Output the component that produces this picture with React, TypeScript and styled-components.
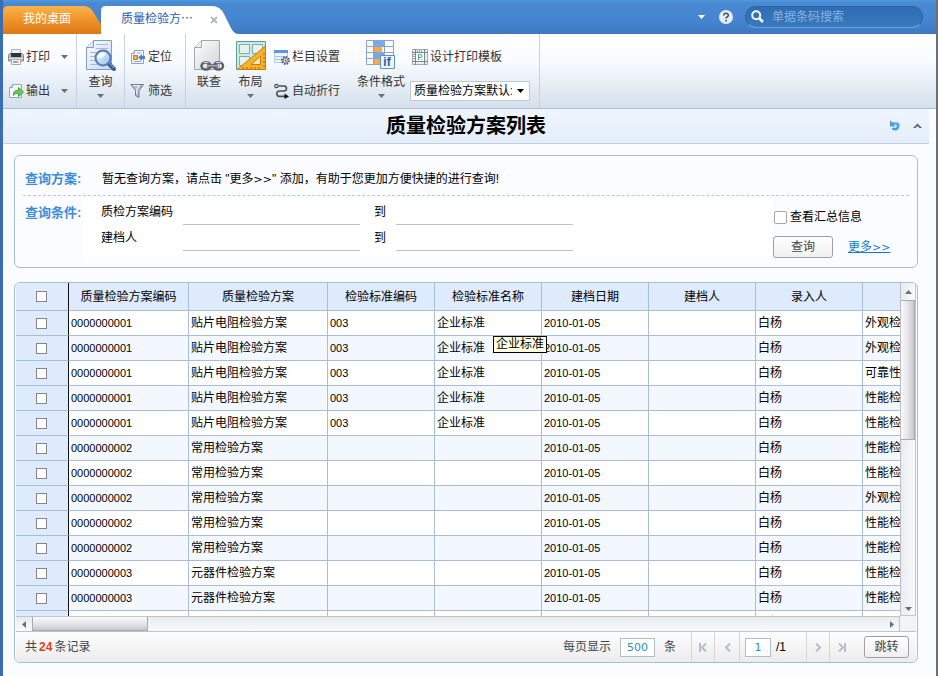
import React, { useLayoutEffect, useRef, useState } from "react";
import styled, { createGlobalStyle, css } from "styled-components";

const GlobalStyle = createGlobalStyle`
  *, *::before, *::after { box-sizing: border-box; }
  body { margin: 0; }
  body, button, input, select, table {
    font-family: "Liberation Sans", "Noto Sans CJK SC", sans-serif;
    font-size: 12px;
    line-height: 16px;
    color: #000;
  }
`;

const Page = styled.div`
  display: flex;
  flex-direction: column;
  height: 100vh;
  min-height: 480px;
  overflow: hidden;
  background: #fafcff;
  border-left: 3px solid #3a6db3;
  border-right: 2px solid #707070;
`;

/* ---------- top bar ---------- */

const TopBar = styled.header`
  display: flex;
  align-items: flex-end;
  flex: none;
  height: 34px;
  background: linear-gradient(#4a9bdc 0, #4a88d2 3px, #4685d0 20px, #3f77c2 100%);
`;

const Tab = styled.div<{ $active?: boolean }>`
  position: relative;
  display: flex;
  align-items: center;
  height: 28px;
  width: ${(p) => (p.$active ? 138 : 98)}px;
  padding: 0 ${(p) => (p.$active ? 16 : 18)}px 2px 20px;
`;

const TabShape = styled.svg`
  position: absolute;
  inset: 0;
  width: 100%;
  height: 100%;
`;

const PlainButton = styled.button`
  display: flex;
  align-items: center;
  justify-content: center;
  position: relative;
  padding: 0;
  border: 0;
  background: none;
  cursor: pointer;
`;

const TabLabel = styled(PlainButton)<{ $active?: boolean }>`
  color: ${(p) => (p.$active ? "#1a62b4" : "#fff")};
`;

const TabClose = styled(PlainButton)`
  margin-left: 16px;
  margin-top: 2px;
  width: 10px;
  height: 10px;
`;

const TopTools = styled.div`
  display: flex;
  align-items: center;
  align-self: stretch;
  gap: 14px;
  margin-left: auto;
  padding-right: 13px;
  padding-bottom: 1px;
`;

const SearchBox = styled.label`
  display: flex;
  align-items: center;
  gap: 8px;
  width: 178px;
  height: 22px;
  margin-left: -2px;
  padding: 0 12px 0 5px;
  border-radius: 11px;
  border: 1px solid #2a65ab;
  border-bottom-color: #69a3df;
  background: linear-gradient(#2f6db3, #3879bd);
`;

const SearchInput = styled.input`
  flex: 1;
  min-width: 0;
  padding: 0;
  border: 0;
  outline: 0;
  background: none;
  color: #fff;
  &::placeholder { color: #83b4e3; opacity: 1; }
`;

/* ---------- ribbon ---------- */

const Ribbon = styled.nav`
  display: flex;
  flex: none;
  height: 75px;
  border-bottom: 1px solid #a9bdd4;
  background: linear-gradient(#fff, #f8fbff 38%, #d4e0ec);
`;

const RibbonGroup = styled.div`
  display: flex;
  padding: 6px 5px 0;
  border-right: 1px solid #c6d2df;
`;

const SmallStack = styled.div<{ $width: number }>`
  display: flex;
  flex-direction: column;
  width: ${(p) => p.$width}px;
`;

const SmallRow = styled.div`
  display: flex;
  align-items: center;
  height: 34px;
`;

const SmallButton = styled(PlainButton)`
  gap: 2px;
  color: #333;
  white-space: nowrap;
`;

const ArrowButton = styled(PlainButton)`
  width: 14px;
  height: 16px;
  margin-left: 7px;
`;

const BigButton = styled(PlainButton)<{ $width: number }>`
  flex-direction: column;
  justify-content: flex-start;
  width: ${(p) => p.$width}px;
  height: 68px;
  color: #333;
`;

const BigLabel = styled.span`
  margin: 2px 0 4px;
  white-space: nowrap;
`;

const TemplateSelect = styled.select`
  appearance: none;
  width: 120px;
  height: 20px;
  padding: 0 17px 0 3px;
  border: 1px solid #c4c8cc;
  border-radius: 0;
  background: #fff;
`;

const SelectWrap = styled.label`
  position: relative;
  display: flex;
  align-items: center;
  margin-left: -2px;
`;

const SelectArrow = styled.span`
  position: absolute;
  right: 6px;
  display: flex;
  pointer-events: none;
`;

/* ---------- title ---------- */

const TitleBar = styled.div`
  display: grid;
  grid-template-columns: 1fr auto 1fr;
  align-items: center;
  flex: none;
  height: 35px;
  margin-right: 7px;
  border-bottom: 1px solid #bccfe3;
  background: linear-gradient(#eff5fd, #e4eefa);
`;

const Title = styled.h1`
  grid-column: 2;
  margin: 0;
  font-size: 20px;
  line-height: 28px;
  font-weight: 700;
`;

const TitleTools = styled.div`
  display: flex;
  align-items: center;
  justify-content: flex-end;
  gap: 11px;
  padding-right: 7px;
`;

/* ---------- query panel ---------- */

const panelFrame = css`
  margin-left: 11px;
  margin-right: 18px;
  border: 1px solid #a6bfd2;
  border-radius: 6px;
`;

const QueryPanel = styled.form`
  ${panelFrame}
  flex: none;
  margin-top: 11px;
  padding: 0 8px 4px;
`;

const QueryRow = styled.div`
  display: flex;
  align-items: center;
  height: 40px;
  padding-top: 8px;
  border-bottom: 1px dashed #c3c6cf;
`;

const QueryLabel = styled.div<{ $top?: boolean }>`
  flex: none;
  width: 60px;
  padding: ${(p) => (p.$top ? "6px 0 0" : "0 0 2px")} 2px;
  font-size: 13px;
  line-height: 18px;
  font-weight: 700;
  color: #3d8bd9;
`;

const QueryHint = styled.p`
  margin: 0 0 0 19px;
  white-space: nowrap;
`;

const Wide = styled.span`
  font-family: "DejaVu Sans", sans-serif;
  font-size: 11px;
`;

const QueryBody = styled.div`
  display: flex;
  align-items: flex-start;
  padding-top: 2px;
`;

const Fields = styled.div`
  display: grid;
  grid-template-columns: 82px 177px 36px 177px;
  flex: 1;
  align-items: center;
  padding: 1px 0 12px 18px;
  background: #fff;
`;

const FieldLabel = styled.label<{ $center?: boolean }>`
  height: 26px;
  line-height: 26px;
  padding-left: ${(p) => (p.$center ? 14 : 0)}px;
`;

const FieldInput = styled.input`
  width: 100%;
  height: 26px;
  padding: 4px 2px 0;
  border: 0;
  border-bottom: 1px solid #c2c2c6;
  outline: 0;
  background: none;
`;

const QueryActions = styled.div`
  display: flex;
  flex-direction: column;
  gap: 11px;
  width: 136px;
  padding-top: 11px;
`;

const ActionRow = styled.div`
  display: flex;
  align-items: center;
`;

const SummaryLabel = styled.label`
  display: flex;
  align-items: center;
  gap: 3px;
  padding-left: 1px;
`;

const Check = styled.input<{ $soft?: boolean }>`
  appearance: none;
  display: block;
  width: ${(p) => (p.$soft ? 13 : 11)}px;
  height: ${(p) => (p.$soft ? 13 : 11)}px;
  margin: 0 ${(p) => (p.$soft ? "0" : "auto")};
  border: 1px solid ${(p) => (p.$soft ? "#a6a6a6" : "#858585")};
  border-radius: ${(p) => (p.$soft ? 2 : 0)}px;
  background: #fff;
  &:checked { background: #3d8bd9; }
`;

const PushButton = styled.button<{ $width: number }>`
  width: ${(p) => p.$width}px;
  height: 22px;
  padding: 0;
  border: 1px solid #a0a0a0;
  border-radius: 3px;
  background: linear-gradient(#fff, #f0f0f0);
  color: #444;
`;

const MoreLink = styled.a`
  margin-left: 15px;
  color: #1278cd;
`;

/* ---------- grid ---------- */

const GridPanel = styled.section`
  ${panelFrame}
  display: flex;
  flex-direction: column;
  flex: 1;
  min-height: 0;
  margin-top: 14px;
  margin-bottom: 13px;
  padding: 0 1px;
  overflow: hidden;
`;

const GridBody = styled.div`
  display: grid;
  grid-template-columns: minmax(0, 1fr) 16px;
  grid-template-rows: minmax(0, 1fr) 16px;
  flex: 1;
  min-height: 0;
`;

const Viewport = styled.div`
  overflow: hidden;
  background: #fff;
`;

const Table = styled.table`
  table-layout: fixed;
  width: 954px;
  border-collapse: separate;
  border-spacing: 0;
`;

const Col = styled.col<{ $width: number }>`
  width: ${(p) => p.$width}px;
`;

const HeadCell = styled.th<{ $mark?: boolean }>`
  height: 28px;
  padding: 0 ${(p) => (p.$mark ? 2 : 0)}px 0 0;
  border-right: 1px solid ${(p) => (p.$mark ? "#111" : "#a9bddb")};
  border-bottom: 1px solid #a9bddb;
  background: #deebfd;
  font-weight: 400;
  text-align: center;
`;

const Cell = styled.td<{ $mark?: boolean; $number?: boolean }>`
  position: relative;
  height: 25px;
  padding: ${(p) => (p.$mark ? "0 2px 0 0" : "0 0 0 2px")};
  border-right: 1px solid ${(p) => (p.$mark ? "#111" : "#a9bddb")};
  border-bottom: 1px solid #a9bddb;
  white-space: nowrap;
  font-size: ${(p) => (p.$number ? 11 : 12)}px;
  ${(p) => p.$mark && "background: #deebfd;"}
`;

const Row = styled.tr`
  &:nth-child(even) { background: #f3f8ff; }
`;

const Tooltip = styled.span`
  position: absolute;
  z-index: 2;
  left: 58px;
  top: 25px;
  width: 54px;
  height: 17px;
  border: 1px solid #000;
  background: #ffffe1;
  line-height: 15px;
  text-align: center;
`;

const VScroll = styled.div`
  display: flex;
  flex-direction: column;
  border-left: 1px solid #b9bdc3;
  border-right: 1px solid #b9c6d3;
  border-bottom: 1px solid #c3c6ca;
  background: linear-gradient(90deg, #e9ecef, #f8f9fb);
`;

const VThumb = styled.div`
  height: 140px;
  border: 1px solid #a9abb0;
  border-width: 1px 1px 1px 0;
  background: linear-gradient(90deg, #fbfbfc, #e3e3e8 55%, #c6c6cd);
`;

const HScroll = styled.div`
  display: flex;
  border: 1px solid #c0c3c7;
  border-left: 0;
  background: linear-gradient(#e9ecef, #f8f9fb);
`;

const HThumb = styled.div`
  width: 116px;
  border: 1px solid #a9abb0;
  border-top: 0;
  background: linear-gradient(#fbfbfc, #e3e3e8 55%, #c6c6cd);
`;

const HSpace = styled.div`
  flex: 1;
`;

const ScrollArrow = styled(PlainButton)<{ $end?: boolean }>`
  flex: none;
  width: ${(p) => (p.$end ? 14 : 16)}px;
  height: 14px;
`;

const VScrollArrow = styled(PlainButton)<{ $end?: boolean }>`
  flex: none;
  height: ${(p) => (p.$end ? 13 : 17)}px;
  ${(p) => p.$end && "margin-top: auto;"}
`;

const Corner = styled.div`
  border-bottom: 1px solid #c0c3c7;
  background: #f1f3f5;
`;

const Pager = styled.footer`
  display: flex;
  align-items: center;
  flex: none;
  height: 30px;
  padding: 0 7px 0 9px;
  background: linear-gradient(#fdfdfd, #ececec);
  color: #444;
`;

const RecordCount = styled.div`
  margin-right: auto;
`;

const CountNumber = styled.strong`
  margin: 0 2px;
  color: #e2401c;
`;

const PagerInput = styled.input<{ $width: number }>`
  width: ${(p) => p.$width}px;
  height: 19px;
  padding: 0;
  border: 1px solid #b3bec8;
  background: #fff;
  color: #2a8fbf;
  font-family: "DejaVu Sans", sans-serif;
  font-size: 11px;
  text-align: center;
`;

const PageSize = styled.label`
  display: flex;
  align-items: center;
  gap: 9px;
  margin-right: 15px;
`;

const PagerButton = styled(PlainButton)<{ $width: number }>`
  width: ${(p) => p.$width}px;
  height: 30px;
  border-left: 1px solid #d6d6d6;
`;

const PageNumber = styled.label`
  display: flex;
  align-items: center;
  gap: 5px;
  height: 30px;
  width: 67px;
  padding-left: 5px;
  border-left: 1px solid #d6d6d6;
  color: #000;
`;

const JumpSlot = styled.div`
  margin-left: 12px;
`;

/* ---------- drawings ---------- */

type Direction = "up" | "down" | "left" | "right";
const trianglePath: Record<Direction, string> = {
  down: "M0 0h7L3.5 4z",
  up: "M0 4h7L3.5 0z",
  left: "M4 0v7L0 3.5z",
  right: "M0 0v7L4 3.5z",
};

function Triangle({ dir = "down", color = "#6b6f76" }: { dir?: Direction; color?: string }) {
  const flat = dir === "up" || dir === "down";
  return (
    <svg width={flat ? 7 : 4} height={flat ? 4 : 7} aria-hidden="true">
      <path d={trianglePath[dir]} fill={color} />
    </svg>
  );
}

const PrintIcon = () => (
  <svg width="16" height="16" viewBox="0 0 16 16" aria-hidden="true">
    <path d="M3.5.5h9v5h-9z" fill="#eef1f8" stroke="#a9b4c8" />
    <path d="M1.5 4.5h13l1 2v5.500h-15V6.500z" fill="#b3b7be" stroke="#868a92" />
    <path d="M3 4h10v4H3z" fill="#303338" />
    <path d="M1 9h14v1H1z" fill="#e0e2e7" />
    <path d="M3.500 10.500h9v5h-9z" fill="#fff" stroke="#a3a9b5" />
    <path d="M5 12h2v2H5z" fill="#6ba6e0" />
    <path d="M7 12h2v2H7z" fill="#dc7aa0" />
    <path d="M9 12h2v2H9z" fill="#e8c560" />
    <path d="M13 7h1v1h-1z" fill="#75dc66" />
  </svg>
);

const ExportIcon = () => (
  <svg width="16" height="16" viewBox="0 0 16 16" aria-hidden="true">
    <path d="M4.500 1.500h9v13h-12v-10z" fill="#f5f7fb" stroke="#98a5b9" />
    <path d="M1.500 4.500h3v-3" fill="#dce3ef" stroke="#98a5b9" />
    <path d="M5.500 12.500c0-4 1-5 5-5v-3l5 4.500-5 4.500v-3c-3 0-4 0-5 2z" fill="#62cd55" stroke="#3fa63b" />
  </svg>
);

const LocateIcon = () => (
  <svg width="16" height="16" viewBox="0 0 16 16" aria-hidden="true">
    <path d="M4.500 1.500h9v13h-12v-10z" fill="#f4f8fd" stroke="#93a3bc" />
    <path d="M1.500 4.500h3v-3" fill="#fff" stroke="#93a3bc" />
    <path d="M7 4h4M4 12.500h7" stroke="#86a8d1" />
    <path d="M3 6h5v5H3z" fill="#dc7e1c" />
    <path d="M4.500 7.500h2v2h-2z" fill="#fcd48a" />
    <path d="M8 8.500l4-3.500v2h3v3h-3v2z" fill="#4387c9" />
  </svg>
);

const FunnelIcon = () => (
  <svg width="16" height="16" viewBox="0 0 16 16" aria-hidden="true">
    <path d="M.800 1.500h12.700L9 7.500v7l-3.500-2v-5z" fill="#aebbd2" stroke="#6b7d99" />
    <path d="M3 2.500h6L6.800 7v4" fill="none" stroke="#f2f6fc" strokeWidth="1.200" />
  </svg>
);

const ColumnsIcon = () => (
  <svg width="16" height="16" viewBox="0 0 16 16" aria-hidden="true">
    <path d="M.500 1.500h13v12H.500z" fill="#eef4fd" stroke="#b6cbe9" />
    <path d="M0 1h14v3H0z" fill="#5d97e2" />
    <path d="M1 7.500h12M1 10.500h12" stroke="#a6c2ea" />
    <circle cx="11.500" cy="11.500" r="3.500" fill="#e4e7ec" stroke="#565d6a" strokeDasharray="1.600 1.100" strokeWidth="2" />
    <circle cx="11.500" cy="11.500" r="2.500" fill="#f0f2f5" stroke="#6c7380" />
    <circle cx="11.500" cy="11.500" r="1" fill="#555c68" />
  </svg>
);

const WrapIcon = () => (
  <svg width="16" height="16" viewBox="0 0 16 16" aria-hidden="true" fill="none" stroke="#4b5057">
    <circle cx="2.500" cy="3" r="1.700" strokeWidth="1.200" />
    <path d="M4.500 3H10a2.500 2.500 0 0 1 0 5H5.500a2.700 2.700 0 0 0 0 5.400H12" strokeWidth="1.600" />
    <path d="M10.500 10.500l4.500 3-4.500 2.500z" fill="#111" stroke="none" />
  </svg>
);

const TemplateIcon = () => (
  <svg width="16" height="16" viewBox="0 0 16 16" aria-hidden="true">
    <path d="M.500.500h15v15H.500z" fill="#eceff2" stroke="#a4abb3" />
    <path d="M3.500 3.500h9v9h-9z" fill="#fff" />
    <path d="M3.500 0v16M12.500 0v16M0 3.500h16M0 12.500h16" stroke="#7d858e" />
    <path d="M5.500 1v2M7.500 1v2M9.500 1v2M1 5.500h2M1 7.500h2M1 9.500h2" stroke="#a4abb3" />
    <path d="M6.500 11V5.500h2a1.500 1.500 0 0 1 0 3h-2M9.500 10.500h1" fill="none" stroke="#3aa878" />
  </svg>
);

const QueryIcon = () => (
  <svg width="32" height="32" viewBox="0 0 32 32" aria-hidden="true">
    <defs>
      <linearGradient id="qdoc" x2="1" y2="1">
        <stop stopColor="#fff" />
        <stop offset="1" stopColor="#c5d5ee" />
      </linearGradient>
      <linearGradient id="qlens" x2="1" y2="1">
        <stop stopColor="#f2faff" />
        <stop offset="1" stopColor="#8fc0ee" />
      </linearGradient>
    </defs>
    <path d="M8.500.500h18v29h-25v-22z" fill="url(#qdoc)" stroke="#7f9cc6" />
    <path d="M1.500 7.500h7v-7" fill="#e3ebf8" stroke="#7f9cc6" />
    <path d="M11 4.500h12M11 8.500h12M5 12.500h18M5 16.500h8M5 20.500h6M5 24.500h8" stroke="#a4bbdf" />
    <path d="M23 23l6 6" stroke="#3a5a94" strokeWidth="4" strokeLinecap="round" />
    <path d="M24 23l5 5" stroke="#8eaddb" strokeWidth="1" />
    <circle cx="18" cy="18" r="7.500" fill="url(#qlens)" stroke="#5779b5" strokeWidth="2" />
    <path d="M12.500 18a5.500 5.500 0 0 1 8-4.500c-1 4-4 5-8 4.500z" fill="#fff" opacity=".8" />
  </svg>
);

const LinkIcon = () => (
  <svg width="32" height="32" viewBox="0 0 32 32" aria-hidden="true">
    <defs>
      <linearGradient id="ldoc" x2="1" y2="1">
        <stop stopColor="#fff" />
        <stop offset="1" stopColor="#cfd2d7" />
      </linearGradient>
    </defs>
    <path d="M8.500.500h18v29h-25v-22z" fill="url(#ldoc)" stroke="#a3a7ad" />
    <path d="M1.500 7.500h7v-7" fill="#eceef0" stroke="#a3a7ad" />
    <g fill="none" stroke="#5c6168" strokeWidth="2.500">
      <rect x="8.500" y="22.500" width="9" height="7" rx="3.500" />
      <rect x="21" y="22.500" width="9" height="7" rx="3.500" />
      <path d="M14 26h11" strokeWidth="3.500" />
    </g>
    <path d="M14 25.800h11M10.500 22.500h5M23 22.500h5" fill="none" stroke="#c8ccd1" strokeWidth="1" />
  </svg>
);

const LayoutIcon = () => (
  <svg width="32" height="32" viewBox="0 0 32 32" aria-hidden="true">
    <path d="M1.500 1.500h29v28h-29z" fill="#cfe8e4" stroke="#599c96" />
    <path d="M4.500 4.500h10v9h-10zM17.500 4.500h10v9h-10zM4.500 16.500h10v9h-10z" fill="#e4f3f0" stroke="#78b3ab" />
    <path d="M30.500 6v23.500H2z" fill="#f6b327" stroke="#c97e12" />
    <path d="M25.500 16v8.500h-9.500z" fill="#fae6b5" stroke="#c97e12" />
    <path d="M8 27v2M12 27v2M16 27v2M20 27v2M24 27v2M28 26h2M28 22h2M28 18h2M28 14h2" stroke="#a86607" />
  </svg>
);

const FormatIcon = () => (
  <svg width="32" height="32" viewBox="0 0 32 32" aria-hidden="true">
    <path d="M1.500.500h27v24h-27z" fill="#f7fafe" stroke="#8ba6cd" />
    <path d="M9 1h10v5H9zM9 13h10v5H9z" fill="#77a8ea" />
    <path d="M9 7h8v5H9zM9 19h8v5H9z" fill="#f2a94f" />
    <path d="M1 6.500h28M1 12.500h28M1 18.500h28M8.500 0v25M19.500 0v25" stroke="#8ba6cd" />
    <path d="M15.500 15.500h14v13h-14z" fill="#ecf4fe" stroke="#628fc5" />
    <text x="22" y="26" textAnchor="middle" fontFamily="Liberation Sans, sans-serif" fontSize="12" fontWeight="700" fill="#2c5a9c">if</text>
  </svg>
);

const HelpIcon = () => (
  <svg width="14" height="14" viewBox="0 0 14 14" aria-hidden="true">
    <circle cx="7" cy="7" r="7" fill="#e4eefa" />
    <path d="M4.800 5.500c0-3 4.600-2.800 4.600-.300 0 1.600-2.300 1.500-2.300 3.300M7.100 9.800v1.700" fill="none" stroke="#42526d" strokeWidth="1.600" />
  </svg>
);

const SearchIcon = () => (
  <svg width="13" height="13" viewBox="0 0 13 13" aria-hidden="true" fill="none" stroke="#f2f8ff">
    <circle cx="5.200" cy="5.200" r="4" strokeWidth="2" />
    <path d="M8 8l4 4" strokeWidth="2.600" />
  </svg>
);

const UndoIcon = () => (
  <svg width="12" height="12" viewBox="0 0 12 12" aria-hidden="true">
    <path d="M2 3.500h5a3.200 3.200 0 1 1-4.500 4.500" fill="none" stroke="#4a9bdb" strokeWidth="2.600" />
    <path d="M0 0v6.500h5.500L3.500 4.500z" fill="#4a9bdb" />
    <path d="M4 2.800h3.500a3.500 3.500 0 0 1 3 2" fill="none" stroke="#9ccff2" />
  </svg>
);

const CollapseIcon = () => (
  <svg width="9" height="6" viewBox="0 0 9 6" aria-hidden="true">
    <path d="M0 5l4.500-4.500L9 5H6.500l-2-2-2 2z" fill="#59626e" />
  </svg>
);

const PageIcon = ({ forward, edge }: { forward?: boolean; edge?: boolean }) => (
  <svg width="9" height="9" viewBox="0 0 9 9" aria-hidden="true" fill="none" stroke="#b4bfca" strokeWidth="2">
    <path d={forward ? "M2 .500l4 4-4 4" : "M7 .500l-4 4 4 4"} />
    {edge && <path d={forward ? "M8 0v9" : "M1 0v9"} />}
  </svg>
);

/* ---------- data ---------- */

const columns = ["质量检验方案编码", "质量检验方案", "检验标准编码", "检验标准名称", "建档日期", "建档人", "录入人", ""];
const widths = [53, 120, 139, 107, 107, 107, 107, 107, 107];
const headHeight = 28;
const rowHeight = 25;

interface Plan {
  code: string;
  name: string;
  std?: string;
  stdName?: string;
  kinds: string[];
}

const plans: Plan[] = [
  { code: "0000000001", name: "贴片电阻检验方案", std: "003", stdName: "企业标准", kinds: ["外观检验", "外观检验", "可靠性检验", "性能检验", "性能检验"] },
  { code: "0000000002", name: "常用检验方案", kinds: ["性能检验", "性能检验", "外观检验", "性能检验", "性能检验"] },
  { code: "0000000003", name: "元器件检验方案", kinds: Array(14).fill("性能检验") },
];

const records = plans.flatMap((p) => p.kinds.map((kind) => ({ ...p, kind })));

const fieldRows = [
  { id: "code", label: "质检方案编码" },
  { id: "creator", label: "建档人" },
];

/* Number of rows that fit, in whole or in part, in the grid's viewport. */
function useVisibleRows() {
  const ref = useRef<HTMLDivElement>(null);
  const [count, setCount] = useState(0);
  useLayoutEffect(() => {
    const node = ref.current;
    if (!node) return;
    const measure = () => setCount(Math.max(0, Math.ceil((node.clientHeight - headHeight) / rowHeight)));
    measure();
    const observer = new ResizeObserver(measure);
    observer.observe(node);
    return () => observer.disconnect();
  }, []);
  return { ref, count };
}

function Tool({ icon, label }: { icon: React.ReactNode; label: string }) {
  return (
    <SmallButton type="button">
      {icon}
      {label}
    </SmallButton>
  );
}

function BigTool({ icon, label, width, menu }: { icon: React.ReactNode; label: string; width: number; menu?: boolean }) {
  return (
    <BigButton type="button" $width={width}>
      {icon}
      <BigLabel>{label}</BigLabel>
      {menu && <Triangle />}
    </BigButton>
  );
}

export default function App() {
  const { ref, count } = useVisibleRows();
  return (
    <>
      <GlobalStyle />
      <Page>
        <TopBar>
          <Tab>
            <TabShape viewBox="0 0 98 28" preserveAspectRatio="none" aria-hidden="true">
              <defs>
                <linearGradient id="orange" x2="0" y2="1">
                  <stop stopColor="#fbb24a" />
                  <stop offset=".5" stopColor="#f09429" />
                  <stop offset="1" stopColor="#dc7814" />
                </linearGradient>
              </defs>
              <path d="M0 28V5q0-5 5-5h76q6 0 10 7l7 12v9z" fill="url(#orange)" />
            </TabShape>
            <TabLabel type="button">我的桌面</TabLabel>
          </Tab>
          <Tab $active>
            <TabShape viewBox="0 0 138 28" preserveAspectRatio="none" aria-hidden="true">
              <path d="M0 28V5q0-5 5-5h106q8 0 12 8l7 14q3 6 8 6z" fill="#fff" />
            </TabShape>
            <TabLabel type="button" $active>质量检验方⋯</TabLabel>
            <TabClose type="button" aria-label="关闭">
              <svg width="8" height="8" aria-hidden="true">
                <path d="M1 1l6 6M7 1L1 7" stroke="#b4b9be" strokeWidth="2" />
              </svg>
            </TabClose>
          </Tab>
          <TopTools>
            <PlainButton type="button" aria-label="菜单"><Triangle color="#fff" /></PlainButton>
            <PlainButton type="button" aria-label="帮助"><HelpIcon /></PlainButton>
            <SearchBox>
              <SearchIcon />
              <SearchInput type="text" placeholder="单据条码搜索" aria-label="单据条码搜索" />
            </SearchBox>
          </TopTools>
        </TopBar>

        <Ribbon>
          <RibbonGroup>
            <SmallStack $width={63}>
              <SmallRow>
                <Tool icon={<PrintIcon />} label="打印" />
                <ArrowButton type="button" aria-label="打印选项"><Triangle /></ArrowButton>
              </SmallRow>
              <SmallRow>
                <Tool icon={<ExportIcon />} label="输出" />
                <ArrowButton type="button" aria-label="输出选项"><Triangle /></ArrowButton>
              </SmallRow>
            </SmallStack>
          </RibbonGroup>
          <RibbonGroup>
            <BigTool icon={<QueryIcon />} label="查询" width={37} menu />
          </RibbonGroup>
          <RibbonGroup>
            <SmallStack $width={50}>
              <SmallRow><Tool icon={<LocateIcon />} label="定位" /></SmallRow>
              <SmallRow><Tool icon={<FunnelIcon />} label="筛选" /></SmallRow>
            </SmallStack>
          </RibbonGroup>
          <RibbonGroup>
            <BigTool icon={<LinkIcon />} label="联查" width={36} />
            <BigTool icon={<LayoutIcon />} label="布局" width={47} menu />
            <SmallStack $width={76}>
              <SmallRow><Tool icon={<ColumnsIcon />} label="栏目设置" /></SmallRow>
              <SmallRow><Tool icon={<WrapIcon />} label="自动折行" /></SmallRow>
            </SmallStack>
            <BigTool icon={<FormatIcon />} label="条件格式" width={62} menu />
            <SmallStack $width={122}>
              <SmallRow><Tool icon={<TemplateIcon />} label="设计打印模板" /></SmallRow>
              <SmallRow>
                <SelectWrap>
                  <TemplateSelect aria-label="打印模板" defaultValue="default">
                    <option value="default">质量检验方案默认:</option>
                  </TemplateSelect>
                  <SelectArrow><Triangle color="#000" /></SelectArrow>
                </SelectWrap>
              </SmallRow>
            </SmallStack>
          </RibbonGroup>
        </Ribbon>

        <TitleBar>
          <Title>质量检验方案列表</Title>
          <TitleTools>
            <PlainButton type="button" aria-label="撤销"><UndoIcon /></PlainButton>
            <PlainButton type="button" aria-label="收起"><CollapseIcon /></PlainButton>
          </TitleTools>
        </TitleBar>

        <QueryPanel onSubmit={(e) => e.preventDefault()}>
          <QueryRow>
            <QueryLabel>查询方案:</QueryLabel>
            <QueryHint>
              暂无查询方案，请点击 "更多<Wide>&gt;&gt;</Wide>" 添加，有助于您更加方便快捷的进行查询!
            </QueryHint>
          </QueryRow>
          <QueryBody>
            <QueryLabel $top>查询条件:</QueryLabel>
            <Fields>
              {fieldRows.map((f) => (
                <React.Fragment key={f.id}>
                  <FieldLabel htmlFor={f.id + "-from"}>{f.label}</FieldLabel>
                  <FieldInput id={f.id + "-from"} type="text" />
                  <FieldLabel htmlFor={f.id + "-to"} $center>到</FieldLabel>
                  <FieldInput id={f.id + "-to"} type="text" />
                </React.Fragment>
              ))}
            </Fields>
            <QueryActions>
              <SummaryLabel>
                <Check type="checkbox" $soft />
                查看汇总信息
              </SummaryLabel>
              <ActionRow>
                <PushButton type="submit" $width={60}>查询</PushButton>
                <MoreLink href="#more">更多<Wide>&gt;&gt;</Wide></MoreLink>
              </ActionRow>
            </QueryActions>
          </QueryBody>
        </QueryPanel>

        <GridPanel>
          <GridBody>
            <Viewport ref={ref}>
              <Table>
                <colgroup>
                  {widths.map((w, i) => <Col key={i} $width={w} />)}
                </colgroup>
                <thead>
                  <tr>
                    <HeadCell $mark><Check type="checkbox" aria-label="全选" /></HeadCell>
                    {columns.map((c, i) => <HeadCell key={i}>{c}</HeadCell>)}
                  </tr>
                </thead>
                <tbody>
                  {records.slice(0, count).map((r, i) => (
                    <Row key={i}>
                      <Cell $mark><Check type="checkbox" aria-label={`选择第${i + 1}行`} /></Cell>
                      <Cell $number>{r.code}</Cell>
                      <Cell>{r.name}</Cell>
                      <Cell $number>{r.std}</Cell>
                      <Cell>
                        {r.stdName}
                        {i === 0 && <Tooltip role="tooltip">企业标准</Tooltip>}
                      </Cell>
                      <Cell $number>2010-01-05</Cell>
                      <Cell />
                      <Cell>白杨</Cell>
                      <Cell>{r.kind}</Cell>
                    </Row>
                  ))}
                </tbody>
              </Table>
            </Viewport>
            <VScroll>
              <VScrollArrow type="button" aria-label="向上滚动"><Triangle dir="up" /></VScrollArrow>
              <VThumb />
              <VScrollArrow type="button" aria-label="向下滚动" $end><Triangle /></VScrollArrow>
            </VScroll>
            <HScroll>
              <ScrollArrow type="button" aria-label="向左滚动"><Triangle dir="left" /></ScrollArrow>
              <HThumb />
              <HSpace />
              <ScrollArrow type="button" aria-label="向右滚动" $end><Triangle dir="right" /></ScrollArrow>
            </HScroll>
            <Corner />
          </GridBody>
          <Pager>
            <RecordCount>共<CountNumber>{records.length}</CountNumber>条记录</RecordCount>
            <PageSize>
              每页显示
              <PagerInput type="text" defaultValue="500" $width={35} />
              条
            </PageSize>
            <PagerButton type="button" aria-label="首页" $width={23}><PageIcon edge /></PagerButton>
            <PagerButton type="button" aria-label="上一页" $width={25}><PageIcon /></PagerButton>
            <PageNumber>
              <PagerInput type="text" defaultValue="1" aria-label="页码" $width={26} />
              /1
            </PageNumber>
            <PagerButton type="button" aria-label="下一页" $width={23}><PageIcon forward /></PagerButton>
            <PagerButton type="button" aria-label="末页" $width={23}><PageIcon forward edge /></PagerButton>
            <JumpSlot><PushButton type="button" $width={45}>跳转</PushButton></JumpSlot>
          </Pager>
        </GridPanel>
      </Page>
    </>
  );
}
